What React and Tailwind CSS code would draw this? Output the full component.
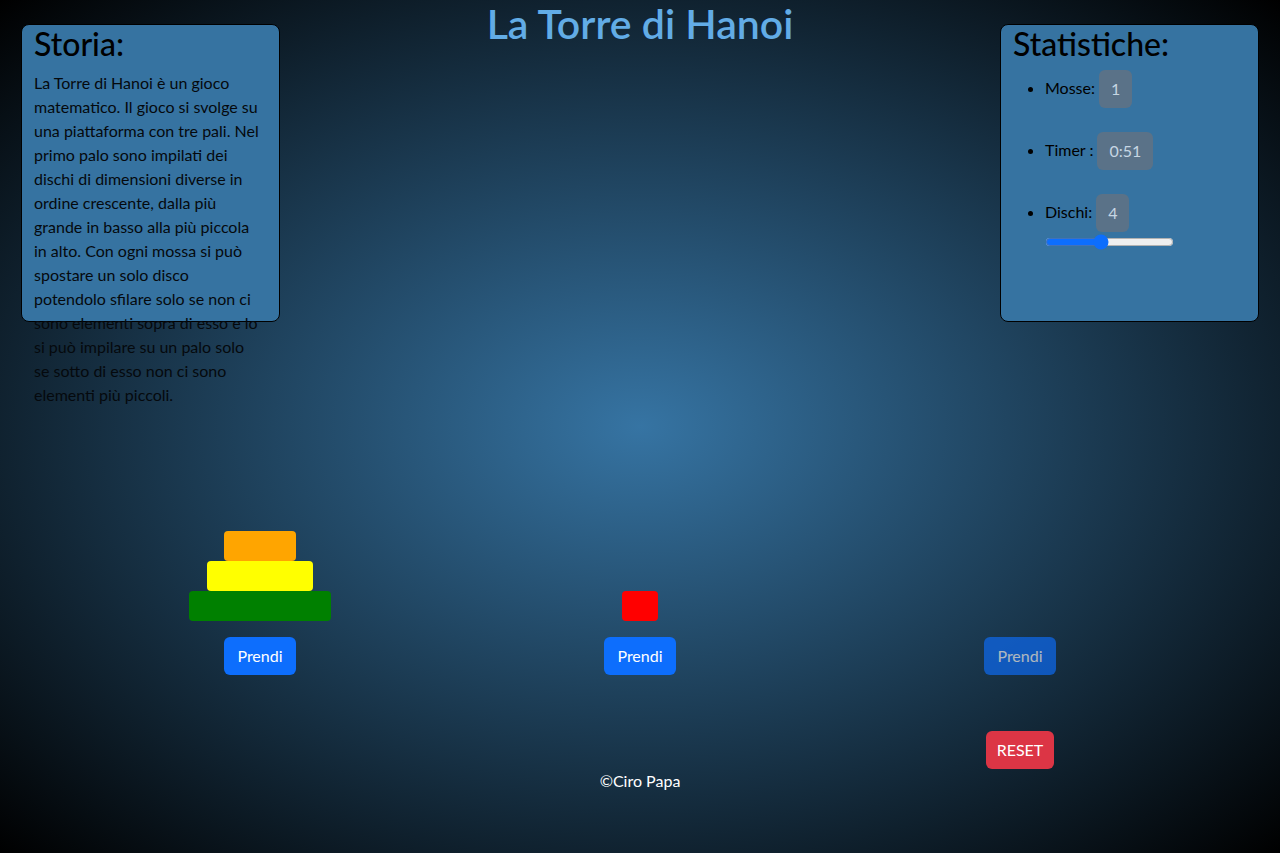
import React from "react";

const lines = [
  "La Torre di Hanoi è un gioco",
  "matematico. Il gioco si svolge su",
  "una piattaforma con tre pali. Nel",
  "primo palo sono impilati dei",
  "dischi di dimensioni diverse in",
  "ordine crescente, dalla più",
  "grande in basso alla più piccola",
  "in alto. Con ogni mossa si può",
  "spostare un solo disco",
  "potendolo sfilare solo se non ci",
  "sono elementi sopra di esso e lo",
  "si può impilare su un palo solo",
  "se sotto di esso non ci sono",
  "elementi più piccoli.",
];

function Disc({ w, color }) {
  return <div className={`h-[30px] rounded-[4px] ${color} ${w}`} />;
}

function Badge({ children }) {
  return (
    <span className="inline-flex h-[38px] items-center rounded-[6px] bg-[#5a7288] px-3 text-[#c6d6e3]">
      {children}
    </span>
  );
}

export default function App() {
  return (
    <div
      className="min-h-screen w-full text-black"
      style={{
        fontFamily: "Lato, 'Noto Sans', sans-serif",
        background: "radial-gradient(ellipse at center, #3674a3 0%, #000 100%)",
      }}
    >
      <div className="flex items-start justify-between px-[21px]">
        <div className="mt-[24px] h-[298px] w-[259px] rounded-[8px] border border-black bg-[#3673a1] px-3">
          <h2 className="mb-2 text-[32px] font-medium leading-[38px]">Storia:</h2>
          <p className="text-[16px] leading-6 text-[#05090d] whitespace-nowrap">
            {lines.map((l, i) => (
              <React.Fragment key={i}>
                {l}
                {i < lines.length - 1 && <br />}
              </React.Fragment>
            ))}
          </p>
        </div>

        <h1 className="text-[41px] font-semibold leading-[48px] text-[#62ace6]">La Torre di Hanoi</h1>

        <div className="mt-[24px] h-[298px] w-[259px] rounded-[8px] border border-black bg-[#3673a1] px-3">
          <h2 className="mb-[7px] text-[32px] font-medium leading-[38px]">Statistiche:</h2>
          <ul className="list-disc pl-8 text-[16px]">
            <li className="mb-6">
              <div className="flex items-center gap-1">
                <span className="-mt-[3px]">Mosse:</span>
                <Badge>1</Badge>
              </div>
            </li>
            <li className="mb-6">
              <div className="flex items-center gap-1">
                <span className="-mt-[3px]">Timer :</span>
                <Badge>0:51</Badge>
              </div>
            </li>
            <li>
              <div className="flex items-center gap-1">
                <span className="-mt-[3px]">Dischi:</span>
                <Badge>4</Badge>
              </div>
              <input
                type="range"
                min="1"
                max="8"
                defaultValue="4"
                className="mt-[2px] block w-[129px] accent-[#0d6efd]"
              />
            </li>
          </ul>
        </div>
      </div>

      <div className="mx-auto mt-[149px] grid w-[1140px] grid-cols-3">
        <div className="flex flex-col items-center">
          <div className="flex h-[150px] flex-col items-center justify-end">
            <Disc w="w-[72px]" color="bg-[#ffa500]" />
            <Disc w="w-[106px]" color="bg-[#ffff00]" />
            <Disc w="w-[142px]" color="bg-[#008000]" />
          </div>
          <button className="mt-4 h-[38px] w-[72px] rounded-[6px] bg-[#0d6efd] text-[16px] text-white">Prendi</button>
        </div>
        <div className="flex flex-col items-center">
          <div className="flex h-[150px] flex-col items-center justify-end">
            <Disc w="w-[36px]" color="bg-[#ff0000]" />
          </div>
          <button className="mt-4 h-[38px] w-[72px] rounded-[6px] bg-[#0d6efd] text-[16px] text-white">Prendi</button>
        </div>
        <div className="flex flex-col items-center">
          <div className="flex h-[150px] flex-col items-center justify-end" />
          <button disabled className="mt-4 h-[38px] w-[72px] rounded-[6px] bg-[#0d6efd] text-[16px] text-white opacity-65">Prendi</button>
        </div>
      </div>

      <div className="mx-auto mt-[56px] grid w-[1140px] grid-cols-3">
        <div />
        <div />
        <div className="flex justify-center">
          <button className="h-[38px] w-[68px] rounded-[6px] bg-[#dc3545] text-[16px] text-white">RESET</button>
        </div>
      </div>

      <footer className="text-center text-[16px] leading-6 text-white">©Ciro Papa</footer>
    </div>
  );
}
